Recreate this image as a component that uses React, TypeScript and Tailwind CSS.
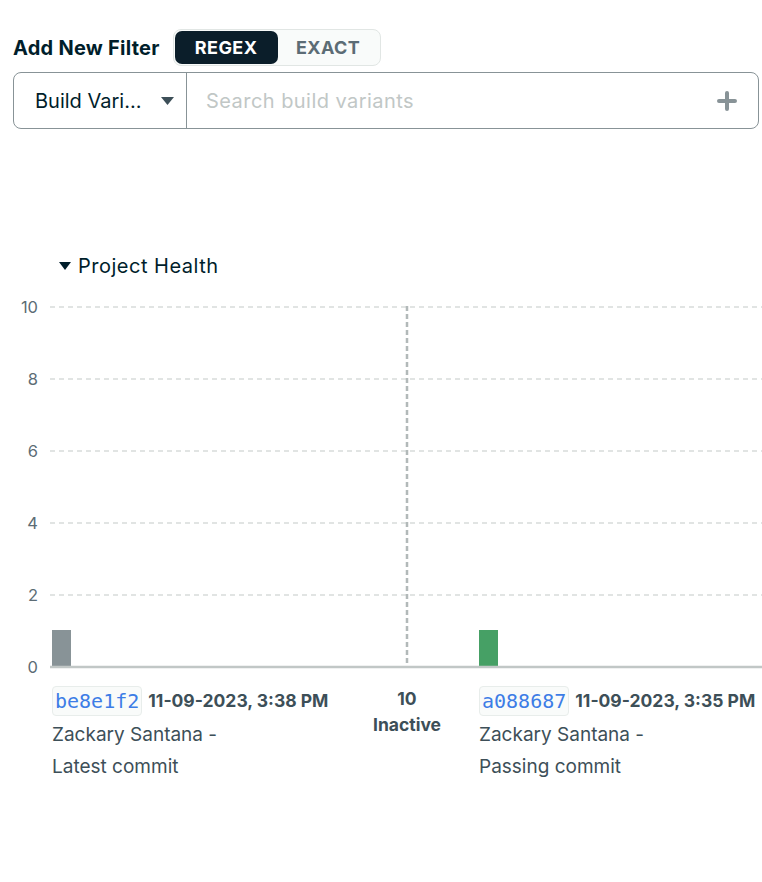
import React from "react";

const gridYs = [7, 79, 151, 223, 295];
const yLabels = ["10", "8", "6", "4", "2", "0"];

function CommitLabel({ hash, date, line2 }: { hash: string; date: string; line2: string }) {
  return (
    <div className="flex flex-col">
      <div className="flex items-center gap-[6px] h-[30px]">
        <span className="h-[30px] px-[2px] flex items-center rounded-[4px] border border-[#e8edeb] bg-[#f9fbfa] text-[#3d7de6] text-[20px] font-['DejaVu_Sans_Mono',monospace]">
          {hash}
        </span>
        <span className="text-[17.5px] font-bold text-[#3d4f58] whitespace-nowrap">{date}</span>
      </div>
      <div className="text-[19px] leading-[32px] text-[#3d4f58] mt-[3px]">Zackary Santana -</div>
      <div className="text-[19px] leading-[32px] text-[#3d4f58]">{line2}</div>
    </div>
  );
}

export default function App() {
  return (
    <div className="w-[762px] h-[882px] bg-white font-['Inter',sans-serif] text-[#001e2b] overflow-hidden">
      <div className="pt-[29px] px-[13px] flex items-center">
        <span className="text-[20px] font-bold tracking-[0.25px]">Add New Filter</span>
        <div className="ml-[13px] flex h-[37px] w-[208px] rounded-[8px] border border-[#e1e6e4] bg-[#f9fbfa] p-[1px]">
          <div className="w-[103px] rounded-[7px] bg-[#0b1e2a] text-white text-[18px] tracking-[0.4px] font-bold flex items-center justify-center">
            REGEX
          </div>
          <div className="flex-1 text-[#5c6c75] text-[18px] tracking-[0.4px] font-bold flex items-center justify-center">EXACT</div>
        </div>
      </div>

      <div className="mt-[6px] ml-[13px] w-[746px] h-[57px] flex rounded-[8px] border border-[#889397]">
        <div className="w-[173px] border-r border-[#889397] flex items-center pl-[21px] pr-[12px]">
          <span className="text-[20px] text-[#001e2b] flex-1 whitespace-nowrap">Build Vari...</span>
          <svg width="13" height="8" viewBox="0 0 13 8">
            <path d="M0 0 L13 0 L6.5 8 Z" fill="#3d4f58" />
          </svg>
        </div>
        <div className="flex-1 flex items-center pl-[19px] pr-[21px]">
          <span className="flex-1 text-[20px] tracking-[0.45px] text-[#c1c7c6]">Search build variants</span>
          <svg width="20" height="20" viewBox="0 0 20 20">
            <path d="M10 2 V18 M2 10 H18" stroke="#889397" strokeWidth="4" strokeLinecap="round" />
          </svg>
        </div>
      </div>

      <div className="mt-[123px] pl-[59px] flex items-center h-[28px] gap-[7px]">
        <svg width="12" height="8" viewBox="0 0 12 8">
          <path d="M0 0 L12 0 L6 8 Z" fill="#001e2b" />
        </svg>
        <span className="text-[20px] tracking-[0.5px] text-[#001e2b]">Project Health</span>
      </div>

      <div className="relative mt-[20px] h-[490px]">
        <svg className="absolute left-0 top-0" width="762" height="380" viewBox="0 0 762 380">
          {gridYs.map((y) => (
            <line key={y} x1="50" x2="762" y1={y} y2={y} stroke="#e1e4e3" strokeWidth="2" strokeDasharray="5 4" />
          ))}
          <line x1="407" x2="407" y1="6" y2="366" stroke="#b2b9b9" strokeWidth="2.5" strokeDasharray="5 3" />
          <rect x="52" y="330" width="19" height="37" fill="#889397" />
          <rect x="479" y="330" width="19" height="37" fill="#46a065" />
          <line x1="50" x2="762" y1="367" y2="367" stroke="#c1c7c6" strokeWidth="2.5" />
        </svg>
        {yLabels.map((l, i) => (
          <span
            key={l}
            className="absolute right-[724px] text-[16.5px] leading-[20px] text-[#5c6c75]"
            style={{ top: 7 + i * 72 - 10 }}
          >
            {l}
          </span>
        ))}
        <div className="absolute left-[52px] top-[386px]">
          <CommitLabel hash="be8e1f2" date="11-09-2023, 3:38 PM" line2="Latest commit" />
        </div>
        <div className="absolute left-[347px] w-[120px] top-[386px] flex flex-col items-center text-[17.5px] font-bold text-[#3d4f58] leading-[26px]">
          <span>10</span>
          <span>Inactive</span>
        </div>
        <div className="absolute left-[479px] top-[386px]">
          <CommitLabel hash="a088687" date="11-09-2023, 3:35 PM" line2="Passing commit" />
        </div>
      </div>
    </div>
  );
}
